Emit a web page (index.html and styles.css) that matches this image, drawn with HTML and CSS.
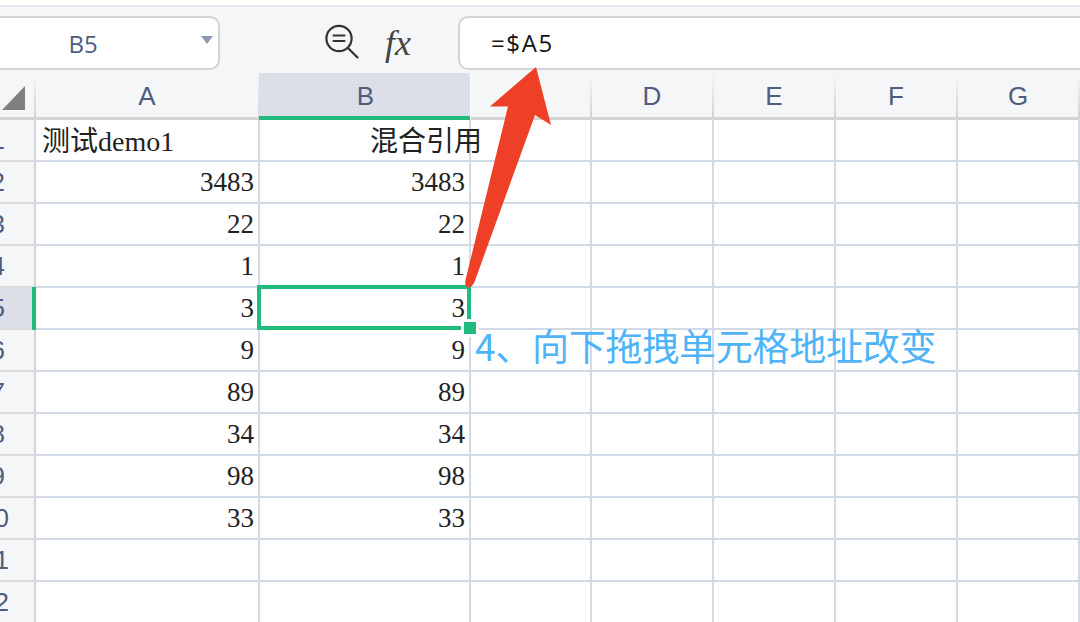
FILE: index.html
```html
<!DOCTYPE html>
<html lang="zh">
<head>
<meta charset="utf-8">
<title>Sheet</title>
<link rel="stylesheet" href="styles.css">
</head>
<body>
<div class="page">
  <div class="topstrip"></div>
  <div class="toolbar">
    <div class="namebox"><span class="name">B5</span><span class="caret"></span></div>
    <svg class="zoomicon" width="36" height="36" viewBox="0 0 36 36" fill="none" stroke="#333" stroke-width="2.2">
      <circle cx="15" cy="14.5" r="12.6"/>
      <path d="M24 24l9.500 9.500M9.500 11.500h11M9.500 17h11" stroke-linecap="round"/>
    </svg>
    <span class="fx">fx</span>
    <div class="formula">=$A5</div>
  </div>
  <div class="sheet">
    <div class="corner"><span class="triangle"></span></div>
    <div class="colhead">A</div><div class="colhead active">B</div><div class="colhead"></div><div class="colhead">D</div><div class="colhead">E</div><div class="colhead">F</div><div class="colhead">G</div>

    <div class="rowhead">1</div><div class="cell text">测试demo1</div><div class="cell title"><span>混合引用</span></div><div class="cell"></div><div class="cell"></div><div class="cell"></div><div class="cell"></div><div class="cell"></div>
    <div class="rowhead">2</div><div class="cell">3483</div><div class="cell">3483</div><div class="cell"></div><div class="cell"></div><div class="cell"></div><div class="cell"></div><div class="cell"></div>
    <div class="rowhead">3</div><div class="cell">22</div><div class="cell">22</div><div class="cell"></div><div class="cell"></div><div class="cell"></div><div class="cell"></div><div class="cell"></div>
    <div class="rowhead">4</div><div class="cell">1</div><div class="cell">1</div><div class="cell"></div><div class="cell"></div><div class="cell"></div><div class="cell"></div><div class="cell"></div>
    <div class="rowhead active">5</div><div class="cell">3</div><div class="cell selected">3<span class="handle"></span></div><div class="cell"></div><div class="cell"></div><div class="cell"></div><div class="cell"></div><div class="cell"></div>
    <div class="rowhead">6</div><div class="cell">9</div><div class="cell">9</div><div class="cell"></div><div class="cell"></div><div class="cell"></div><div class="cell"></div><div class="cell"></div>
    <div class="rowhead">7</div><div class="cell">89</div><div class="cell">89</div><div class="cell"></div><div class="cell"></div><div class="cell"></div><div class="cell"></div><div class="cell"></div>
    <div class="rowhead">8</div><div class="cell">34</div><div class="cell">34</div><div class="cell"></div><div class="cell"></div><div class="cell"></div><div class="cell"></div><div class="cell"></div>
    <div class="rowhead">9</div><div class="cell">98</div><div class="cell">98</div><div class="cell"></div><div class="cell"></div><div class="cell"></div><div class="cell"></div><div class="cell"></div>
    <div class="rowhead wide">10</div><div class="cell">33</div><div class="cell">33</div><div class="cell"></div><div class="cell"></div><div class="cell"></div><div class="cell"></div><div class="cell"></div>
    <div class="rowhead wide">11</div><div class="cell"></div><div class="cell"></div><div class="cell"></div><div class="cell"></div><div class="cell"></div><div class="cell"></div><div class="cell"></div>
    <div class="rowhead wide">12</div><div class="cell"></div><div class="cell"></div><div class="cell"></div><div class="cell"></div><div class="cell"></div><div class="cell"></div><div class="cell"></div>
  </div>
  <svg class="arrow" width="100" height="232" viewBox="460 62 100 232">
    <path fill="#ee4026" d="M536 67L490 106.500L508 106.500L465.500 280Q464.500 287 468 287.500Q472 287.500 474.500 282L535 115L551 125Z"/>
  </svg>
  <div class="note">4、向下拖拽单元格地址改变</div>
</div>
</body>
</html>
```
FILE: styles.css
```css
html, body {
  margin: 0;
  padding: 0;
  background: #fff;
}
.page {
  position: relative;
  width: 1080px;
  height: 622px;
  overflow: hidden;
  font-family: "Liberation Serif", "Noto Sans CJK SC", serif;
}
.topstrip {
  height: 5px;
  background: #fff;
  border-bottom: 2px solid #e4e7ee;
}
.toolbar {
  display: flex;
  align-items: center;
  height: 66px;
  background: #f5f6f8;
  box-sizing: border-box;
  padding-top: 6px;
}
.namebox {
  flex: none;
  display: flex;
  align-items: center;
  box-sizing: border-box;
  width: 240px;
  height: 54px;
  margin-left: -20px;
  background: #fff;
  border: 2px solid #d3d3d3;
  border-radius: 10px;
}
.name {
  width: 202px;
  text-align: center;
  font: 24px "Open Sans", sans-serif;
  color: #4e5c80;
}
.caret {
  width: 0;
  height: 0;
  margin-left: 17px;
  margin-top: -6px;
  border-left: 6px solid transparent;
  border-right: 6px solid transparent;
  border-top: 8px solid #8d99b3;
}
.zoomicon {
  flex: none;
  margin-left: 104px;
  margin-top: -2px;
}
.fx {
  flex: none;
  width: 30px;
  margin-left: 25px;
  font: italic 36px "Liberation Serif", serif;
  color: #444;
}
.formula {
  flex: none;
  box-sizing: border-box;
  width: 660px;
  height: 54px;
  margin-left: 43px;
  padding-left: 31px;
  background: #fff;
  border: 2px solid #d3d3d3;
  border-radius: 10px;
  font: 24px/50px "Open Sans", sans-serif;
  letter-spacing: 1.600px;
  color: #111;
}
.sheet {
  display: grid;
  grid-template-columns: 36px 224px 211px 121px 122px 122px 122px 122px;
  grid-template-rows: 47px repeat(12, 42px);
}
.corner, .colhead {
  box-sizing: border-box;
  background: linear-gradient(#f5f6f8, #d2d2d2) right / 2px 100% no-repeat #f5f6f8;
  border-bottom: 3px solid #d4d4d4;
}
.corner {
  position: relative;
}
.triangle {
  position: absolute;
  left: 2px;
  bottom: 7px;
  width: 23px;
  height: 24px;
  background: #808080;
  clip-path: polygon(100% 0, 100% 100%, 0 100%);
}
.colhead {
  padding-right: 2px;
  text-align: center;
  font: 26px/46px "Liberation Sans", sans-serif;
  color: #4e5c80;
}
.colhead.active {
  background: #dcdfe7;
  margin-left: -1px;
  margin-right: 1px;
  padding-right: 0;
  padding-left: 2px;
  border-bottom-color: #20bb7d;
  border-bottom-width: 4px;
}
.rowhead {
  position: relative;
  display: flex;
  justify-content: flex-end;
  box-sizing: border-box;
  padding-right: 29px;
  background: #f5f6f8;
  border-right: 2px solid #d4d4d4;
  border-bottom: 2px solid #dcdcdc;
  font: 26px/40px "Liberation Sans", sans-serif;
  color: #4e5c80;
}
.rowhead.wide {
  padding-right: 25px;
}
.rowhead.active {
  background: #dcdfe7;
}
.rowhead.active::after {
  content: "";
  position: absolute;
  top: -1px;
  bottom: -2px;
  right: -2px;
  width: 4px;
  background: #20bb7d;
}
.cell {
  position: relative;
  box-sizing: border-box;
  padding-right: 4px;
  border-right: 2px solid #d2dae8;
  border-bottom: 2px solid #d2dae8;
  text-align: right;
  font-size: 27px;
  line-height: 40px;
  color: #222;
}
.cell.text {
  padding-left: 6px;
  text-align: left;
  font-size: 28px;
  line-height: 44px;
}
.cell.title {
  padding-right: 0;
  font-size: 28px;
  line-height: 44px;
}
.cell.title span {
  margin-right: -13px;
}
.cell.selected::after {
  content: "";
  position: absolute;
  top: -3px;
  left: -3px;
  right: -2px;
  bottom: -2px;
  border: 4px solid #20bb7d;
}
.handle {
  position: absolute;
  z-index: 1;
  right: -10px;
  bottom: -9px;
  width: 12px;
  height: 12px;
  background: #20bb7d;
  border: 3px solid #fff;
}
.arrow {
  position: absolute;
  left: 460px;
  top: 62px;
}
.note {
  position: absolute;
  left: 475px;
  top: 322px;
  font: 37px/46px "Noto Sans CJK SC", sans-serif;
  letter-spacing: -0.250px;
  white-space: nowrap;
  color: #4fb4f7;
}
```
